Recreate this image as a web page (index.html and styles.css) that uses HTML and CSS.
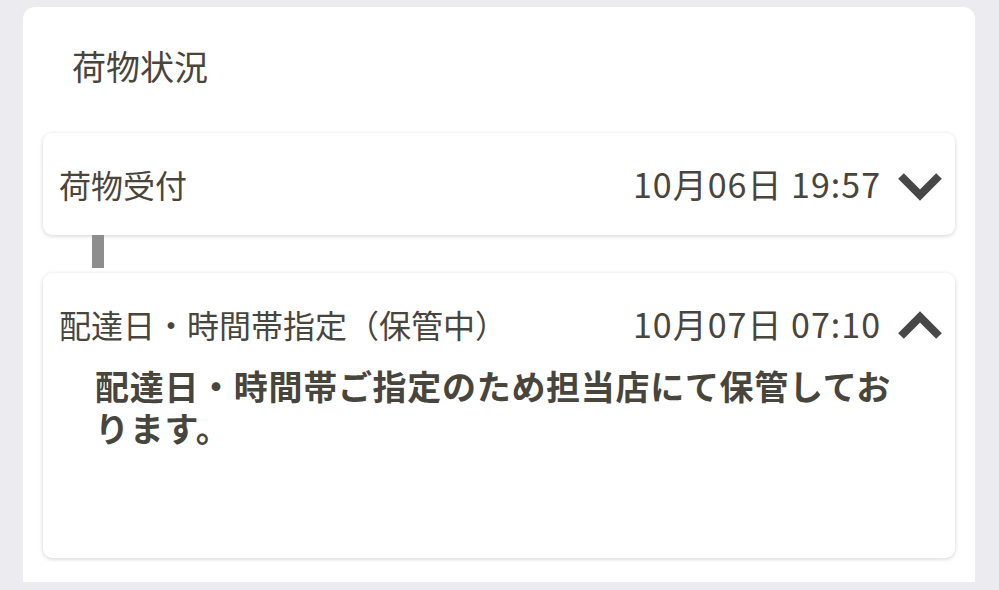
FILE: index.html
```html
<!DOCTYPE html>
<html lang="ja">
<head>
  <meta charset="UTF-8">
  <title>荷物状況</title>
  <link rel="stylesheet" href="styles.css">
</head>
<body>

<section class="status-panel">
  <h2 class="panel-title">荷物状況</h2>

  <div class="step">
    <div class="step-head">
      <span class="step-name">荷物受付</span>
      <span class="step-time">10月06日 19:57</span>
      <svg class="chevron" viewBox="0 0 46 30" width="46" height="30">
        <polyline points="4,5 23,24 42,5" />
      </svg>
    </div>
  </div>

  <div class="step-line"></div>

  <div class="step open">
    <div class="step-head">
      <span class="step-name">配達日・時間帯指定（保管中）</span>
      <span class="step-time">10月07日 07:10</span>
      <svg class="chevron" viewBox="0 0 46 30" width="46" height="30">
        <polyline points="4,25 23,6 42,25" />
      </svg>
    </div>
    <p class="step-body">配達日・時間帯ご指定のため担当店にて保管しております。</p>
  </div>
</section>

</body>
</html>
```

FILE: styles.css
```css
body {
  margin: 0;
  background: #ecebf0;
  font-family: "Noto Sans CJK JP", "Noto Sans", sans-serif;
  color: #48453d;
}
.status-panel {
  margin: 7px 24px 0 23px;
  padding: 38px 20px 24px;
  background: #fff;
  border-radius: 12px 12px 0 0;
}
.panel-title {
  margin: 0 0 46px 29px;
  font-size: 34px;
  font-weight: normal;
  line-height: 42px;
}
.step {
  background: #fff;
  border-radius: 9px;
  box-shadow: 0 1px 4px rgba(0, 0, 0, 0.18);
}
.step-head {
  display: flex;
  align-items: center;
  padding: 32px 12px 32px 16px;
  line-height: 38px;
}
.open .step-head {
  padding-bottom: 22px;
}
.step-name {
  flex: 1;
  font-size: 32px;
}
.step-time {
  font-size: 34px;
  letter-spacing: 1px;
  margin-right: 16px;
}
.chevron {
  display: block;
  margin-top: 4px;
}
.chevron polyline {
  fill: none;
  stroke: #474747;
  stroke-width: 8;
}
.step-line {
  width: 12px;
  height: 33px;
  margin-left: 49px;
  margin-bottom: 5px;
  background: #8e8e8e;
}
.step-body {
  margin: 0;
  padding: 0 48px 109px 52px;
  font-size: 34px;
  font-weight: bold;
  letter-spacing: 0.7px;
  line-height: 42px;
}
```
